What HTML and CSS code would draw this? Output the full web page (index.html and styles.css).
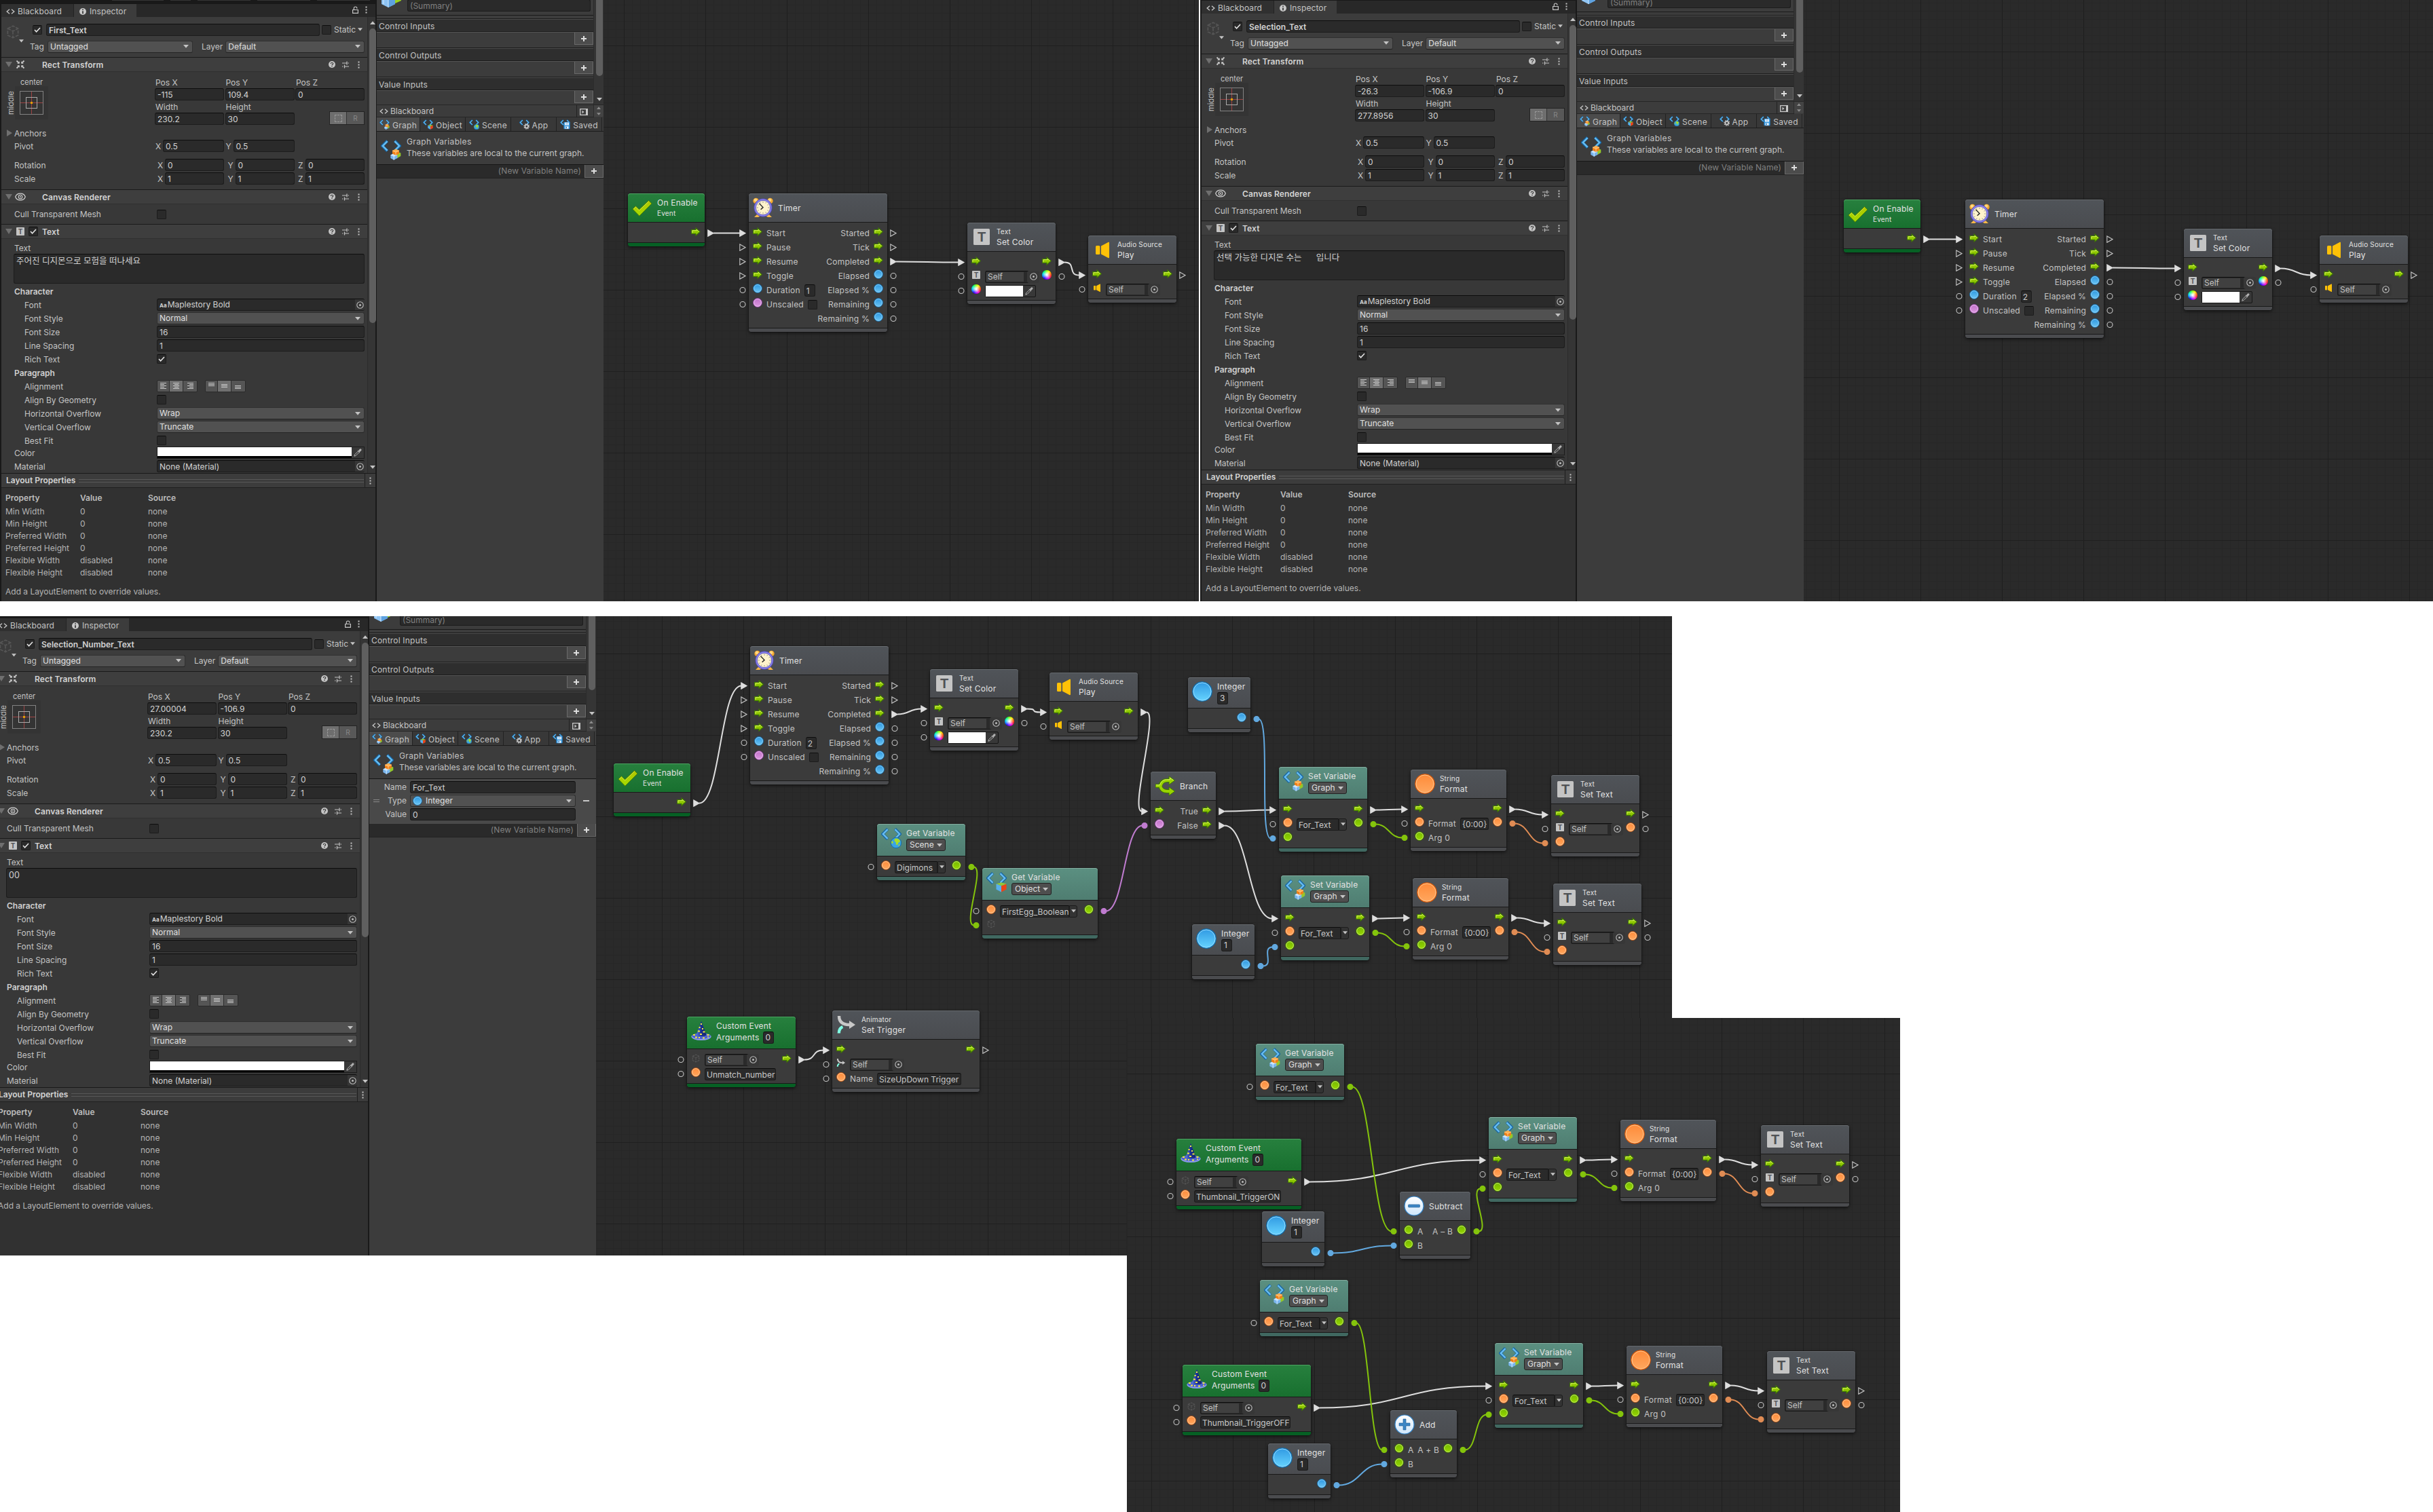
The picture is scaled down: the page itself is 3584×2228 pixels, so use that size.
FILE: index.html
```
<!DOCTYPE html>
<html lang="ko">
<head>
<meta charset="utf-8">
<title>Visual Scripting – Text graphs</title>
<link rel="stylesheet" href="styles.css">
</head>
<body>
<svg class="defs" width="0" height="0" aria-hidden="true">
  <defs>
    <linearGradient id="gBlue" x1="0" y1="0" x2="0" y2="1"><stop offset="0" stop-color="#2b96e0"/><stop offset="1" stop-color="#6cc6f5"/></linearGradient>
    <linearGradient id="gBlueBig" x1="0" y1="0" x2="0" y2="1"><stop offset="0" stop-color="#3099e2"/><stop offset="1" stop-color="#66d4ff"/></linearGradient>
    <linearGradient id="gOrange" x1="0" y1="0" x2="0" y2="1"><stop offset="0" stop-color="#ff8a38"/><stop offset="1" stop-color="#ffa860"/></linearGradient>
    <linearGradient id="gGreen" x1="0" y1="0" x2="0" y2="1"><stop offset="0" stop-color="#74b800"/><stop offset="1" stop-color="#98d800"/></linearGradient>
    <linearGradient id="gPink" x1="0" y1="0" x2="0" y2="1"><stop offset="0" stop-color="#c070c8"/><stop offset="1" stop-color="#dc98e0"/></linearGradient>
    <linearGradient id="gCheck" x1="0" y1="0" x2="0" y2="1"><stop offset="0" stop-color="#b0c400"/><stop offset="1" stop-color="#a4dc00"/></linearGradient>
    <linearGradient id="gHat" x1="0" y1="0" x2="1" y2="0"><stop offset="0" stop-color="#5a78e0"/><stop offset=".5" stop-color="#1a2f90"/><stop offset="1" stop-color="#16246c"/></linearGradient>
    <linearGradient id="gWhite" x1="0" y1="0" x2="0" y2="1"><stop offset="0" stop-color="#ffffff"/><stop offset="1" stop-color="#cfe6fa"/></linearGradient>
  </defs>
  <symbol id="arrow" viewBox="0 0 14 13"><path d="M.8 3.6H7V.9l6.2 5.6L7 12.1V9.4H.8z" fill="#8fc800" stroke="#3f7a00" stroke-width="1.1"/><path d="M1.9 8.3V4.7h6.2V3.2l3.6 3.3" fill="none" stroke="#d8f25c"/></symbol>
  <symbol id="blue" viewBox="0 0 14 14"><circle cx="7" cy="7" r="6.4" fill="url(#gBlue)" stroke="#1268a4"/><circle cx="7" cy="7" r="5.4" fill="none" stroke="#8fd0f6" stroke-width=".9"/></symbol>
  <symbol id="green" viewBox="0 0 14 14"><circle cx="7" cy="7" r="6.4" fill="url(#gGreen)" stroke="#356400"/><circle cx="7" cy="7" r="5.4" fill="none" stroke="#c8ee70" stroke-width=".9"/></symbol>
  <symbol id="orange" viewBox="0 0 14 14"><circle cx="7" cy="7" r="6.4" fill="url(#gOrange)" stroke="#b85010"/><circle cx="7" cy="7" r="5.4" fill="none" stroke="#ffd0a0" stroke-width=".9"/></symbol>
  <symbol id="pink" viewBox="0 0 14 14"><circle cx="7" cy="7" r="6.4" fill="url(#gPink)" stroke="#8a3c98"/><circle cx="7" cy="7" r="5.4" fill="none" stroke="#eec4f2" stroke-width=".9"/></symbol>
  <symbol id="blueBig" viewBox="0 0 30 30"><circle cx="15" cy="15" r="14.2" fill="url(#gBlueBig)" stroke="#0e6cac" stroke-width="1.2"/><circle cx="15" cy="15" r="13" fill="none" stroke="#98dcff"/></symbol>
  <symbol id="orangeBig" viewBox="0 0 30 30"><circle cx="15" cy="15" r="14.2" fill="url(#gOrange)" stroke="#d85808" stroke-width="1.2"/><circle cx="15" cy="15" r="13" fill="none" stroke="#ffc890"/></symbol>
  <symbol id="minus" viewBox="0 0 30 30"><circle cx="15" cy="15" r="14" fill="url(#gWhite)" stroke="#2d80c8" stroke-width="1.2"/><rect x="6.5" y="13" width="17" height="4" rx="1" fill="#3d86c4" stroke="#1f5c94" stroke-width=".6"/></symbol>
  <symbol id="plus" viewBox="0 0 30 30"><circle cx="15" cy="15" r="14" fill="url(#gWhite)" stroke="#2d80c8" stroke-width="1.2"/><path d="M13 7h4v6h6v4h-6v6h-4v-6H7v-4h6z" fill="#3d86c4" stroke="#1f5c94" stroke-width=".6"/></symbol>
  <symbol id="check" viewBox="0 0 30 30"><path d="M.8 17l4.6-4.2 5.2 5L24.6 4.4 29 9 10.8 27.2z" fill="url(#gCheck)" stroke="#4a7c00" stroke-width=".9"/><path d="M2.2 17l3.2-2.9 5.2 5L24.6 5.8" fill="none" stroke="#d8ee50" stroke-width=".8"/></symbol>
  <symbol id="clock" viewBox="0 0 30 30"><circle cx="4.6" cy="5" r="4.3" fill="#f4a830"/><circle cx="25.4" cy="5" r="4.3" fill="#f4a830"/><circle cx="4" cy="3.8" r="2.4" fill="#ffd880"/><circle cx="25" cy="3.8" r="2.4" fill="#ffd880"/><path d="M7 24l-5 5h6l3-2zM23 24l5 5h-6l-3-2z" fill="#f8b848"/><circle cx="15" cy="15" r="13.4" fill="#5a50c0"/><circle cx="15" cy="15" r="12.4" fill="#8c86ee"/><circle cx="15" cy="15" r="10.6" fill="#fff3cc" stroke="#5650b8" stroke-width=".8"/><path d="M15 5.8v2M15 22.2v2M5.8 15h2M22.2 15h2M10.4 7l.8 1.5M19.6 7l-.8 1.5M10.4 23l.8-1.5M19.6 23l-.8-1.5M7 10.4l1.5.8M23 10.4l-1.5.8M7 19.6l1.5-.8M23 19.6l-1.5-.8" stroke="#777" stroke-width=".8"/><path d="M9.4 8.8L15 14.6l-3.4 3.2" fill="none" stroke="#2c2c2c" stroke-width="1.5"/></symbol>
  <symbol id="tico" viewBox="0 0 24 24"><rect width="24" height="24" rx="1.6" fill="#c4c4c4"/><text x="12" y="19" text-anchor="middle" font-family="Liberation Sans, sans-serif" font-weight="700" font-size="20" fill="#4f5255">T</text></symbol>
  <symbol id="speaker" viewBox="0 0 24 28"><rect x="2" y="8" width="6.4" height="13" rx="1.6" fill="#ffc107"/><path d="M10 8.6L20.4 3c1-.5 1.6 0 1.6 1v21c0 1-.6 1.5-1.6 1L10 20.4z" fill="#ffc107"/></symbol>
  <symbol id="branch" viewBox="0 0 30 30"><path d="M1 15h7c1.5-6 5-8 10-8h4" fill="none" stroke="#3f7a00" stroke-width="6"/><path d="M8 15c1.5 6 5 8 10 8h4" fill="none" stroke="#3f7a00" stroke-width="6"/><path d="M21 .8L29.6 7 21 13.2zM21 16.8L29.6 23 21 29.2z" fill="#9ad400" stroke="#3f7a00"/><path d="M1.6 15h7c1.5-6 4.6-8 9.6-8h4M8 15c1.5 6 5 8 10 8h4" fill="none" stroke="#9ad400" stroke-width="4"/><path d="M2 13.8h5.6c1.4-5.4 5-8 10-8h5V3.2L27.6 7" fill="none" stroke="#dcf470" stroke-width=".9"/></symbol>
  <symbol id="hat" viewBox="0 0 30 30"><ellipse cx="15" cy="23.6" rx="14.6" ry="5.4" fill="#8c9cec"/><ellipse cx="15" cy="22.6" rx="13.6" ry="4.4" fill="#4c62d0"/><path d="M15 .6L22.4 21c0 2.6-14.8 2.6-14.8 0z" fill="url(#gHat)"/><path d="M14 4h2v2h-2zM11.6 9h2v2h-2zM16 11h2v2h-2zM10 14.5h3v2h-3zM17.5 15.5h3v2h-3zM13 19h3v2h-3zM3 20h3v2H3zM6 23.5h3v2H6zM17 24.5h3v2h-3zM23.5 20h3v2h-3zM11 24h2v2h-2zM24 23.5h2V25h-2z" fill="#f4ea40"/></symbol>
  <symbol id="anim" viewBox="0 0 30 30"><path d="M4 2c0 9 5 13 15 13" fill="none" stroke="#c8c8c8" stroke-width="4.4"/><path d="M19 9l9 6-9 6z" fill="#c8c8c8"/><path d="M3.8 27.500c0-5 1.600-8 5.600-9.500" fill="none" stroke="#80ffe4" stroke-width="4.400"/></symbol>
  <symbol id="cube" viewBox="0 0 20 22"><path d="M3 6.5L10 3l7 3.500v9L10 19l-7-3.500zM3 6.500L10 10l7-3.500M10 10v9" fill="none" stroke="#555" stroke-width="1.600" stroke-dasharray="4.500 1.500"/></symbol>
  <symbol id="br" viewBox="0 0 30 30"><path d="M9.600 1.500L2.200 9l7.400 7.500M20.400 1.500L27.800 9l-7.400 7.500" fill="none" stroke="#1464a4" stroke-width="4.200"/><path d="M9.600 2.200L2.800 9l6.800 6.800M20.400 2.200L27.200 9l-6.800 6.800" fill="none" stroke="#68bdf0" stroke-width="2.400"/></symbol>
  <symbol id="vGraph" viewBox="0 0 30 30"><use href="#br"/><path d="M19.500 19.500l4.500-2.300 5.300 2.300v4.500l-5 3-4.800-3z" fill="#94c828"/><path d="M14.300 22.400l4.900-2.400 5.200 2.400v4.600l-5.200 2.700-4.900-2.700z" fill="#78b4ec"/><path d="M14.300 22.400l4.900-2.400 5.200 2.400-5.200 2.500z" fill="#cce6ff"/><path d="M19.200 24.900v4.800" stroke="#d8ecff"/><path d="M17 16l5-2.300 5 2.300v4.400l-5 2.500-5-2.500z" fill="#f08018"/><path d="M17 16l5-2.300 5 2.300-5 2.300z" fill="#ffb050"/><path d="M22 18.300v4.600M17 16l5 2.300 5-2.300" fill="none" stroke="#ffd8a0" stroke-width=".8"/></symbol>
  <symbol id="vScene" viewBox="0 0 30 30"><use href="#br"/><circle cx="22" cy="22" r="7.700" fill="#3aa4e4" stroke="#146cae"/><path d="M21 15.500c3-.6 6 1 7.200 4-.8 2-2.500 1-3 3s-2 3.500-3 2 .2-3-1.400-4-2-3.400.2-5zM25 26l2-2.500c.5 1 .2 2.500-1 3.500zM15.500 19c1.500 0 2.500 1.500 2 3s-1.600 1-2.600.5z" fill="#a8dc28"/></symbol>
  <symbol id="vObject" viewBox="0 0 30 30"><use href="#br"/><path d="M14.500 17.600l7.500-2.400 7.500 2.400L22 20.600z" fill="#90c83c"/><path d="M14.500 17.600L22 20.600V29.500l-7.500-4z" fill="#58b0ec"/><path d="M29.500 17.600L22 20.600V29.500l7.500-4z" fill="#ec4418"/></symbol>
  <symbol id="vApp" viewBox="0 0 30 30"><use href="#br"/><circle cx="21.500" cy="20.500" r="6.500" fill="none" stroke="#b8b8b8" stroke-width="5" stroke-dasharray="2.600 2.500"/><circle cx="21.500" cy="20.500" r="4.600" fill="none" stroke="#c4c4c4" stroke-width="3.600"/></symbol>
  <symbol id="vSaved" viewBox="0 0 30 30"><use href="#br"/><rect x="11" y="8" width="18" height="20" rx="1.500" fill="#3d9ce0" stroke="#1868ac"/><rect x="14" y="9" width="12" height="8" fill="#eef6ff"/><path d="M16 11.500h8M16 14h8" stroke="#5a9cd0"/><rect x="15" y="20.500" width="10" height="7" fill="#eef6ff"/><rect x="17" y="21.500" width="3" height="5" fill="#2d7cc0"/></symbol>
  <symbol id="code" viewBox="0 0 13 8"><path d="M5 .8L1.200 4 5 7.200M8 .8L11.800 4 8 7.200" fill="none" stroke="#c4c4c4" stroke-width="1.400"/></symbol>
  <symbol id="info" viewBox="0 0 10 10"><circle cx="5" cy="5" r="5" fill="#c8c8c8"/><path d="M5 1.600v1.500M5 4.200v4" stroke="#333" stroke-width="1.700"/></symbol>
  <symbol id="help" viewBox="0 0 10 10"><circle cx="5" cy="5" r="5" fill="#c4c4c4"/><path d="M3.300 4c0-2.300 3.400-2.200 3.400-.3C6.700 5 5 4.800 5 6.200M5 7v1.200" fill="none" stroke="#3a3a3a" stroke-width="1.200"/></symbol>
  <symbol id="preset" viewBox="0 0 10 11"><path d="M0 3h6.500M8.500 3H10M7 .5v5M0 8h1.500M3.500 8H10M3.500 5.500v5" fill="none" stroke="#c4c4c4" stroke-width="1.200"/></symbol>
  <symbol id="dots" viewBox="0 0 3 11"><path d="M.5.5h2v2h-2zM.5 4.500h2v2h-2zM.5 8.500h2v2h-2z" fill="#c4c4c4"/></symbol>
  <symbol id="lock" viewBox="0 0 9 11"><path d="M.6 5.500h7.800v4.900H.6zM2.300 5.500V3.300C2.300.2 6.900.2 6.900 3.300v.4" fill="none" stroke="#c4c4c4" stroke-width="1.200"/></symbol>
  <symbol id="rect" viewBox="0 0 14 14"><path d="M1.500 1.500L5 5M12.500 1.500L9 5M1.500 12.500L5 9M12.500 12.500L9 9" stroke="#c4c4c4" stroke-width="1.800"/><path d="M5.800 2.200v3.600H2.200zM8.200 2.200v3.600h3.600zM5.800 11.800V8.200H2.200zM8.200 11.800V8.200h3.600z" fill="#c4c4c4"/></symbol>
  <symbol id="eye" viewBox="0 0 16 12"><path d="M.7 6C3-.6 13-.6 15.300 6 13 12.600 3 12.600.7 6z" fill="none" stroke="#d0d0d0" stroke-width="1.200"/><circle cx="8" cy="6" r="2.800" fill="none" stroke="#d0d0d0" stroke-width="1.100"/><circle cx="8" cy="6" r="1" fill="#d0d0d0"/></symbol>
  <symbol id="tick" viewBox="0 0 10 8"><path d="M1 4l2.600 2.800L9 1" fill="none" stroke="#e6e6e6" stroke-width="1.500"/></symbol>
  <symbol id="target" viewBox="0 0 11 11"><circle cx="5.500" cy="5.500" r="4.700" fill="none" stroke="#bdbdbd" stroke-width="1.100"/><circle cx="5.500" cy="5.500" r="1.500" fill="#bdbdbd"/></symbol>
  <symbol id="dropper" viewBox="0 0 12 12"><path d="M.8 11.200l.8-2.400 5-5 1.600 1.600-5 5z" fill="none" stroke="#b4b4b4"/><path d="M5.800 3l3.200 3.200M7.200 3.400l2-2.400c1-1 2.600.6 1.700 1.700L8.600 4.800z" fill="#b4b4b4" stroke="#b4b4b4"/></symbol>
  <symbol id="down" viewBox="0 0 8 5"><path d="M0 0h8L4 4.800z" fill="#c4c4c4"/></symbol>
  <symbol id="fold" viewBox="0 0 10 8"><path d="M0 0h10L5 8z" fill="#6f6f6f"/></symbol>
  <symbol id="unfold" viewBox="0 0 8 10"><path d="M0 0v10l8-5z" fill="#6f6f6f"/></symbol>
  <symbol id="anchor" viewBox="0 0 49 49"><rect width="49" height="49" fill="#343434"/><path d="M7.500 24.500h34M24.500 7.500v34" stroke="#a04444"/><rect x="7.500" y="7.500" width="34" height="34" fill="none" stroke="#828282"/><rect x="16.500" y="16.500" width="16" height="16" fill="none" stroke="#aaa"/><rect x="23" y="23" width="3" height="3" fill="#e0a000"/></symbol>
  <symbol id="twoCubes" viewBox="0 0 32 12"><path d="M1 0h20v6l-10 5L1 6z" fill="#8ec4f4"/><path d="M11 0v11l10-5V0z" fill="#5ea2e0"/><path d="M11 0v11M4 0v6" stroke="#d4ebff"/><path d="M21 0h9v1l-9 4z" fill="#98d020"/></symbol>
  <symbol id="dock" viewBox="0 0 12 10"><path d="M.7.7h10.600v8.600H.7z" fill="none" stroke="#c8c8c8" stroke-width="1.300"/><path d="M9 0h3v10H9zM3.500 2.800v4.400L6.500 5z" fill="#c8c8c8"/></symbol>
</svg>

<main class="sheet">
  <div class="top-row">
    <section class="screen screen-a" data-graph="first"></section>
    <section class="screen screen-b" data-graph="selection"></section>
  </div>
  <section class="screen screen-c" data-graph="number"></section>
  <section class="screen screen-d" data-graph="thumbnail"></section>
</main>
<script src="app.js"></script>
</body>
</html>
```
FILE: styles.css
```
* { box-sizing: border-box; }
body {
  margin: 0;
  width: 3584px;
  height: 2228px;
  overflow: hidden;
  background: #fff;
  color: #c4c4c4;
  font: 12px/18px Inter, "Noto Sans CJK KR", sans-serif;
  white-space: nowrap;
}
svg { display: block; flex: none; }
.defs { position: absolute; }
.sheet { position: relative; width: 3584px; height: 2228px; overflow: hidden; }
.top-row { display: flex; gap: 2px; }
.screen { position: relative; overflow: hidden; background: #191919; }
.screen-a { width: 1766px; height: 886px; }
.screen-b { width: 1816px; height: 886px; }
.screen-c { width: 2463px; height: 942px; margin-top: 22px; }
.screen-d { position: absolute; left: 1660px; top: 1500px; width: 1139px; height: 728px; }
.side { position: relative; display: flex; width: 889px; }
.screen-a .side { height: 886px; }
.screen-b .side { height: 891px; margin-top: -5px; }
.screen-c .side { height: 945px; margin: -3px 0 0 -11px; }

/* inspector */
.inspector { display: flex; flex-direction: column; width: 553px; margin-right: 2px; padding-left: 2px; background: #191919; }
.band { display: flex; height: 6px; flex: none; gap: 10px; padding-left: 163px; overflow: hidden; }
.band i { height: 1px; background: #353535; }
.tabs { display: flex; height: 19px; flex: none; background: #282828; }
.tab { display: flex; align-items: center; padding-top: 3px; background: #303030; }
.tab.back { width: 107px; gap: 4px; padding-left: 7px; border-right: 1px solid #232323; }
.tab.on { width: 92px; gap: 5px; padding-left: 8px; background: #3c3c3c; }
.tab-tools { display: flex; flex: 1; align-items: center; justify-content: flex-end; gap: 10px; padding: 0 12px 3px 0; }
.tab, .comp-head b { letter-spacing: .1px; }
.scroll { display: flex; height: 672px; flex: none; }
.props { width: 539px; background: #383838; }
.bar { display: flex; flex-direction: column; align-items: center; width: 12px; padding: 6px 0 6px 2px; background: #353535; border-left: 1px solid #2c2c2c; }
.bar .up { transform: rotate(180deg); }
.thumb { width: 10px; height: 434px; margin: 6px 0 auto; border-radius: 5px; background: #5f5f5f; }
.object { display: flex; height: 59px; background: #3c3c3c; }
.object-icon { width: 42px; padding: 10px 0 0 6px; }
.object-icon .caret { margin: -1px 0 0 20px; }
.object-main { flex: 1; padding: 9px 4px 0 0; }
.line { display: flex; align-items: center; line-height: 19px; }
.object-main .line + .line { margin-top: 6px; }
.field { height: 18px; padding: 0 3px; border: 1px solid #1c1c1c; border-top-color: #0d0d0d; border-radius: 3px; background: #2a2a2a; color: #d2d2d2; line-height: 17px; overflow: hidden; }
.name { width: 403px; margin: 0 3px 0 6px; font-weight: 600; }
.box { display: flex; align-items: center; justify-content: center; width: 14px; height: 14px; flex: none; border: 1px solid #1c1c1c; border-top-color: #0d0d0d; border-radius: 2px; background: #2a2a2a; }
.object-main .box { margin-left: 4px; }
.object-main .name + .box { margin: 0 4px 0 0; }
.drop { display: flex; align-items: center; justify-content: space-between; height: 18px; padding: 0 5px 0 3px; border: 1px solid #303030; border-bottom-color: #242424; border-radius: 3px; background: #515151; color: #e0e0e0; line-height: 14px; }
.tag { width: 214px; margin: 0 13px 0 5px; }
.layer { flex: 1; margin-left: 4px; }
.comp-head { display: flex; align-items: center; height: 22px; padding: 0 11px 0 6px; border-top: 1px solid #1a1a1a; border-bottom: 1px solid #303030; background: #3e3e3e; }
.comp-head .glyph { width: 24px; height: 16px; display: flex; align-items: center; justify-content: center; }
.comp-head .slot { width: 20px; display: flex; }
.comp-head b { flex: 1; font-weight: 600; color: #d4d4d4; padding-top: 1px; }
.tools { display: flex; align-items: center; gap: 10px; }
.tools .dots { margin-left: 3px; }
.rect-body { height: 173px; padding: 6px 4px 0 19px; }
.rect-top { display: flex; height: 72px; }
.anchor-box { display: grid; grid-template-columns: 12px 49px; grid-template-rows: 15px 49px; width: 207px; margin-left: -11px; margin-right: 11px; font-size: 11px; line-height: 18px; }
.anchor-box .hz { grid-column: 2; padding-left: 8px; line-height: 18px; }
.anchor-box .vt { writing-mode: vertical-rl; transform: rotate(180deg); line-height: 12px; text-align: center; font-size: 11px; }
.xyz { display: grid; grid-template-columns: 102px 102px 102px; column-gap: 1.5px; width: 309px; }
.xyz > span { height: 18px; padding-left: 1px; line-height: 19px; }
.pad-toggle { display: flex; justify-self: end; width: 52px; height: 20px; margin-top: -2px; border: 1px solid #232323; background: #585858; color: #888; text-align: center; font-size: 10px; }
.pad-toggle i { width: 25px; background: #6e6e6e; border-right: 1px solid #333; }
.pad-toggle i::before { content: ""; display: block; width: 9px; height: 9px; margin: 4px 7px; border: 1px dashed #999; }
.pad-toggle span { flex: 1; }
.row { display: flex; height: 18px; }
.row > label { width: 207px; flex: none; line-height: 19px; }
.anchors { align-items: center; gap: 3px; margin: 3px 0 1px -11px; }
.pivot { margin-bottom: 10px; }
.rotation { margin-bottom: 2px; }
.axis { display: grid; grid-template-columns: 11px 1fr; padding-left: 1px; line-height: 19px; }
.axis.in { padding-left: 4px; }
.cull { display: flex; align-items: center; height: 29px; padding-left: 19px; }
.cull label { width: 210px; }
.text-body { display: flex; flex-direction: column; gap: 2px; height: 345px; padding: 4px 4px 0 19px; }
.text-body > .lead { height: 16px; line-height: 20px; }
.text-body .row { align-items: center; }
.text-body .row > label { width: 210px; }
.text-body .in > label { padding-left: 15px; }
.text-body .row > .field, .text-body .row > .drop { flex: 1; }
.area { height: 44px; margin-left: -1px; padding: 0 3px; font-size: 12.5px; line-height: 19px; white-space: pre; flex: none; }
.head { height: 18px; font-weight: 600; color: #d0d0d0; padding-top: 1px; }
.obj { display: flex; align-items: center; justify-content: space-between; padding-right: 0; border-right-width: 0; }
.obj .pick { display: flex; align-items: center; justify-content: center; width: 14px; height: 16px; background: #363636; }
.obj small { font-size: 8px; font-weight: 700; margin-right: 1px; }
.aligns { display: flex; margin-right: 11px; border: 1px solid #2a2a2a; border-radius: 2px; background: #555; height: 18px; }
.aligns i { display: flex; flex-direction: column; gap: 1px; width: 20px; padding: 3px 5px; border-right: 1px solid #2c2c2c; }
.aligns i:first-child { width: 18px; padding-left: 4px; }
.aligns i:last-child { border: 0; }
.aligns i.on { background: #707070; }
.aligns s { flex: none; width: 9px; height: 1px; background: #c8c8c8; }
.aligns .h s:nth-child(even) { width: 6px; }
.aligns .c { align-items: center; }
.aligns .r { align-items: flex-end; }
.aligns .m { padding-top: 5px; }
.aligns .b { padding-top: 7px; }
.swatch { display: flex; flex: 1; height: 18px; border: 1px solid #1c1c1c; background: #383838; }
.swatch i { flex: 1; background: #fff; border-bottom: 3px solid #000; }
.swatch svg { margin: 2px 3px; }
.color-row { margin-top: -2px; }
.layout-head { display: flex; align-items: center; height: 22px; flex: none; border-top: 1px solid #1a1a1a; border-bottom: 1px solid #1f1f1f; background: #3c3c3c; padding-left: 7px; font-weight: 600; color: #d4d4d4; line-height: 20px; }
.layout-head i { flex: 1; height: 5px; margin: 0 1px 0 5px; border: solid #585858; border-width: 1px 0; }
.layout-head span.end { display: flex; align-items: center; justify-content: center; width: 16px; height: 20px; border-left: 1px solid #1f1f1f; }
.layout-body { flex: 1; padding: 6px 0 0 6px; background: #313131; color: #b4b4b4; }
.layout-grid { display: grid; grid-template-columns: 110px 100px 1fr; }
.layout-grid b { font-weight: 600; margin-bottom: 2px; color: #bdbdbd; }
.layout-body p { margin: 10px 0 0; }

/* graph inspector and blackboard */
.panel { width: 334px; background: #3c3c3c; display: flex; flex-direction: column; }
.units { display: flex; height: 154px; flex: none; }
.unit-list { width: 319px; }
.summary { display: flex; height: 23px; gap: 7px; padding-left: 6px; border-bottom: 1px solid #1a1a1a; }
.summary .field { width: 270px; height: 18px; margin-top: -1px; color: #808080; line-height: 18px; }
.unit { height: 43px; padding-top: 4px; }
.unit .cap { height: 20px; padding-left: 3px; border: solid #1c1c1c; border-width: 1px 0; background: #2e2e2e; box-shadow: inset 0 1px #4c4c4c; line-height: 21px; letter-spacing: .2px; }
.unit .slot { display: flex; justify-content: flex-end; border-top: 1px solid #555; height: 19px; }
.add { display: flex; align-items: center; justify-content: center; width: 28px; height: 18px; border: 1px solid #6a6a6a; border-top: 0; background: #4c4c4c; }
.add::before { content: ""; width: 8px; height: 8px; background: linear-gradient(#ddd,#ddd) 50% 50%/8px 2px no-repeat, linear-gradient(#ddd,#ddd) 50% 50%/2px 8px no-repeat; }
.units .bar { width: 15px; padding: 0 0 5px 2px; }
.units .thumb { height: 112px; margin-top: 0; border-radius: 0 0 5px 5px; }
.bb-head { display: flex; align-items: center; height: 19px; flex: none; gap: 3px; padding-left: 4px; border-top: 1px solid #262626; border-bottom: 1px solid #262626; }
.bb-head .dock { width: 22px; height: 18px; margin-left: auto; border-left: 1px solid #222; padding: 5px 4px 0; }
.bb-head .step { display: flex; flex-direction: column; justify-content: space-around; align-items: center; width: 15px; height: 18px; background: #484848; border-left: 1px solid #222; opacity: .6; }
.bb-head .step svg:first-child { transform: rotate(180deg); }
.bb-tabs { display: flex; height: 21px; flex: none; border-bottom: 1px solid #1c1c1c; }
.bb-tabs span { display: flex; align-items: center; justify-content: center; gap: 4px; width: 67px; padding-top: 3px; border-right: 1px solid #222; background: #383838; letter-spacing: .3px; }
.bb-tabs span:first-child { width: 64px; background: #4c4c4c; }
.bb-tabs svg { margin-top: -3px; }
.bb-info { display: flex; height: 49px; flex: none; padding: 7px 0 0 6px; gap: 8px; border-bottom: 1px solid #161616; }
.bb-info svg { margin-top: 5px; }
.bb-info b { display: block; font-weight: 400; line-height: 16px; letter-spacing: .35px; }
.bb-info span { line-height: 14px; }
.var { display: flex; align-items: center; height: 66px; flex: none; background: #494949; padding: 0 0 2px 6px; }
.var .grip { width: 9px; height: 4px; border: solid #888; border-width: 1px 0; }
.var .fields { display: flex; flex-direction: column; gap: 2px; }
.var .fields div { display: flex; align-items: center; }
.var label { flex: none; width: 45px; padding-right: 5px; text-align: right; }
.var .fields .field, .var .fields .drop { flex: 0 0 244px; }
.var .minus { width: 9px; height: 2px; margin-left: 11px; background: #c8c8c8; }
.var .drop span { display: flex; gap: 5px; align-items: center; }
.new-var { display: flex; height: 20px; flex: none; border-bottom: 1px solid #222; background: #2a2a2a; color: #808080; text-align: right; letter-spacing: .1px; }
.new-var span:first-child { flex: 1; padding-right: 4px; }
.new-var .add { flex: none; height: 19px; margin-left: 1px; }

/* graph canvas */
.canvas {
  position: absolute;
  inset: 0 0 0 auto;
  overflow: hidden;
  background-color: #2a2a2a;
  background-image:
    linear-gradient(90deg, #1f1f1f 1px, transparent 1px), linear-gradient(#1f1f1f 1px, transparent 1px),
    linear-gradient(90deg, #272727 1px, transparent 1px), linear-gradient(#272727 1px, transparent 1px);
  background-size: 120px 120px, 120px 120px, 12px 12px, 12px 12px;
}
.screen-a .canvas { left: 889px; background-position: 30px 67px; }
.screen-b .canvas { left: 889px; background-position: 52px 76px; }
.screen-c .canvas { left: 878px; background-position: 97px 55px; }
.screen-d .canvas { left: 0; background-position: 36px 82px; }
.wires { position: absolute; inset: 0; width: 100%; height: 100%; fill: none; stroke-width: 2; }
.node { position: absolute; border-radius: 4px; background: #3b3b3b; box-shadow: 0 2px 5px rgba(0,0,0,.55), 0 0 0 .5px #1c1c1c; }
.node header { display: flex; height: 42px; border-radius: 4px 4px 0 0; background: linear-gradient(#505459, #4a4c50); box-shadow: inset 0 1px #666a6e; color: #e2e2e2; padding: 6px 0 0 6px; gap: 7px; }
.node header > svg, .node header > .hic { width: 30px; height: 30px; }
.node.var-node header { height: 47px; background: linear-gradient(#5b9081, #4f7d71); box-shadow: inset 0 1px #84ac9f; }
.node.event header { background: linear-gradient(#27803e, #18702f); box-shadow: inset 0 1px #4fa464; }
.node.tall header { height: 47px; }
.node.lit header { height: 45px; }
.hic { display: flex; align-items: center; justify-content: center; }
.titles { margin-top: -1px; letter-spacing: .2px; }
.titles div { height: 17px; line-height: 18px; display: flex; align-items: center; gap: 5px; }
.titles .sub { font-size: 10px; height: 15px; line-height: 14px; }
.titles.sub-last div:last-child { height: 15px; line-height: 13px; }
.titles.one { padding-top: 8px; }
.titles .pop { display: inline-flex; height: 18px; gap: 4px; padding: 0 4px; border-color: #222; background: #4e4e4e; letter-spacing: 0; }
.titles .field { width: 16px; height: 18px; }
.node .body { padding: 5px 0 3px; border: solid #191919; border-width: 1px 0; }
.node footer { height: 5px; border-radius: 0 0 4px 4px; background: #4a4b4e; }
.node.var-node footer { background: #406860; }
.node.event footer { background: #066024; }
.prow { position: relative; display: flex; justify-content: space-between; height: 21px; padding: 0 6px; }
.port { display: flex; align-items: center; gap: 6px; height: 21px; letter-spacing: .2px; }
.port > .pi { width: 14px; height: 14px; margin-top: -5px; display: flex; align-items: center; justify-content: center; }
.port.out { flex-direction: row-reverse; }
.port .field { color: #c8c8c8; padding: 0 2px; letter-spacing: 0; overflow: visible; }
.port span.lbl { padding-top: 1px; }
.wheel { border-radius: 50%; background: radial-gradient(#fff 5%, transparent 65%), conic-gradient(#8f0, #fe0, #f60, #f22, #f0c, #80f, #20f, #08f, #0dd, #0f6, #8f0); }
.self { display: flex; width: 74px; height: 18px; padding: 1px; border: 1px solid #1c1c1c; border-top-color: #0d0d0d; border-right: 0; border-radius: 3px; background: #2a2a2a; line-height: 14px; letter-spacing: 0; }
.self span { width: 55px; flex: none; padding-left: 2px; background: #404040; }
.self i { display: flex; align-items: center; justify-content: center; width: 18px; height: 18px; flex: none; margin: -2px 0 0 5px; border-radius: 3px; background: #373737; }
.combo { display: flex; }
.combo .field { border-radius: 3px 0 0 3px; }
.combo i { display: flex; align-items: center; justify-content: center; width: 12px; height: 18px; border: 1px solid #1c1c1c; border-radius: 0 3px 3px 0; background: #333; }
.chip { display: flex; width: 75px; height: 18px; border: 1px solid #161616; background: #383838; border-radius: 2px; }
.chip i { width: 55px; background: #fff; }
.chip svg { margin: 2px 3px; }
.pin { position: absolute; top: 5px; width: 10px; height: 11px; fill: none; stroke: #c4c4c4; stroke-width: 1.1; }
.pin.l { left: -14px; }
.pin.r { right: -14px; }
```
FILE: app.js
```
const ic = (n, w, h = w, c = '') => `<svg class="${c}" width="${w}" height="${h}"><use href="#${n}"/></svg>`;
const field = (v, w) => `<div class="field"${w ? ` style="width:${w}px"` : ''}>${v}</div>`;
const drop = (v, c = '') => `<div class="drop ${c}"><span>${v}</span>${ic('down', 8, 5)}</div>`;
const box = (on) => `<span class="box">${on ? ic('tick', 10, 8) : ''}</span>`;
const axis = (l, v, c = '') => `<div class="axis ${c}"><span>${l}</span>${field(v)}</div>`;
const compHead = (glyph, slot, title) => `<div class="comp-head">${ic('fold', 10, 8)}<span class="glyph">${glyph}</span><span class="slot">${slot}</span><b>${title}</b><span class="tools">${ic('help', 10)}${ic('preset', 10, 11)}${ic('dots', 3, 11, 'dots')}</span></div>`;
const row = (label, control, c = 'in') => `<div class="row ${c}"><label>${label}</label>${control}</div>`;
const lines = (n) => '<s></s>'.repeat(n);

function inspector(d) {
  return `<div class="inspector">
  <div class="band">${d.band ? [76, 30, 78, 78, 78].map((w) => `<i style="width:${w}px"></i>`).join('') : ''}</div>
  <div class="tabs"><div class="tab back">${ic('code', 13, 8)}Blackboard</div><div class="tab on">${ic('info', 10)}Inspector</div>
    <div class="tab-tools">${ic('lock', 9, 11)}${ic('dots', 3, 11)}</div></div>
  <div class="scroll"><div class="props">
    <div class="object"><div class="object-icon">${ic('cube', 22, 24)}${ic('down', 7, 5, 'caret')}</div><div class="object-main">
      <div class="line">${box(true)}<div class="field name">${d.name}</div>${box(false)}Static&nbsp;${ic('down', 7, 5)}</div>
      <div class="line">Tag${drop('Untagged', 'tag')}Layer${drop('Default', 'layer')}</div></div></div>
    ${compHead(ic('rect', 14), '', 'Rect Transform')}
    <div class="rect-body">
      <div class="rect-top"><div class="anchor-box"><span class="hz">center</span><span class="vt">middle</span>${ic('anchor', 49)}</div>
        <div><div class="xyz"><span>Pos X</span><span>Pos Y</span><span>Pos Z</span></div>
        <div class="xyz">${d.pos.map((v) => field(v)).join('')}</div>
        <div class="xyz"><span>Width</span><span>Height</span></div>
        <div class="xyz">${d.size.map((v) => field(v)).join('')}<div class="pad-toggle"><i></i><span>R</span></div></div></div></div>
      <div class="row anchors">${ic('unfold', 8, 10)}<label>Anchors</label></div>
      <div class="row pivot"><label>Pivot</label><div class="xyz">${axis('X', '0.5')}${axis('Y', '0.5')}</div></div>
      <div class="row rotation"><label>Rotation</label><div class="xyz">${'XYZ'.split('').map((a) => axis(a, 0, 'in')).join('')}</div></div>
      <div class="row scale"><label>Scale</label><div class="xyz">${'XYZ'.split('').map((a) => axis(a, 1, 'in')).join('')}</div></div>
    </div>
    ${compHead(ic('eye', 16, 12), '', 'Canvas Renderer')}
    <div class="cull"><label>Cull Transparent Mesh</label>${box(false)}</div>
    ${compHead(ic('tico', 12), box(true), 'Text')}
    <div class="text-body"><div class="lead">Text</div><div class="field area">${d.text}</div>
      <div class="head">Character</div>
      ${row('Font', `<div class="field obj"><span><small>Aa</small>Maplestory Bold</span><span class="pick">${ic('target', 11)}</span></div>`)}
      ${row('Font Style', drop('Normal'))}
      ${row('Font Size', field(16))}
      ${row('Line Spacing', field(1))}
      ${row('Rich Text', box(true))}
      <div class="head">Paragraph</div>
      ${row('Alignment', `<div class="aligns"><i class="h">${lines(5)}</i><i class="h c on">${lines(5)}</i><i class="h r">${lines(5)}</i></div><div class="aligns"><i>${lines(3)}</i><i class="m on">${lines(3)}</i><i class="b">${lines(3)}</i></div>`)}
      ${row('Align By Geometry', box(false))}
      ${row('Horizontal Overflow', drop('Wrap'))}
      ${row('Vertical Overflow', drop('Truncate'))}
      ${row('Best Fit', box(false))}
      ${row('Color', `<div class="swatch"><i></i>${ic('dropper', 12)}</div>`, 'color-row')}
      ${row('Material', `<div class="field obj"><span>None (Material)</span><span class="pick">${ic('target', 11)}</span></div>`, '')}
    </div></div>
    <div class="bar">${ic('down', 8, 5, 'up')}<div class="thumb"></div>${ic('down', 8, 5)}</div></div>
  <div class="layout-head">Layout Properties<i></i><span class="end">${ic('dots', 3, 11)}</span></div>
  <div class="layout-body"><div class="layout-grid"><b>Property</b><b>Value</b><b>Source</b>
    ${[['Min Width', 0], ['Min Height', 0], ['Preferred Width', 0], ['Preferred Height', 0], ['Flexible Width', 'disabled'], ['Flexible Height', 'disabled']].map(([k, v]) => `<span>${k}</span><span>${v}</span><span>none</span>`).join('')}
    </div><p>Add a LayoutElement to override values.</p></div>
  </div>`;
}

function panel(d) {
  const unit = (t) => `<div class="unit"><div class="cap">${t}</div><div class="slot"><span class="add"></span></div></div>`;
  const v = d.variable;
  return `<div class="panel"><div class="units"><div class="unit-list"><div class="summary">${ic('twoCubes', 32, 12)}${field('(Summary)')}</div>
    ${['Control Inputs', 'Control Outputs', 'Value Inputs'].map(unit).join('')}</div>
    <div class="bar"><div class="thumb"></div>${ic('down', 8, 5)}</div></div>
  <div class="bb-head">${ic('code', 13, 8)}Blackboard<span class="dock">${ic('dock', 12, 10)}</span><span class="step">${ic('down', 6, 4)}${ic('down', 6, 4)}</span></div>
  <div class="bb-tabs">${['Graph', 'Object', 'Scene', 'App', 'Saved'].map((t) => `<span>${ic('v' + t, 15)}${t}</span>`).join('')}</div>
  <div class="bb-info">${ic('vGraph', 30)}<div><b>Graph Variables</b><span>These variables are local to the current graph.</span></div></div>
  ${v ? `<div class="var"><span class="grip"></span><div class="fields"><div><label>Name</label>${field(v.name)}</div><div><label>Type</label>${drop(ic('blue', 14) + v.type)}</div><div><label>Value</label>${field(v.value)}</div></div><span class="minus"></span></div>` : ''}
  <div class="new-var"><span>(New Variable Name)</span><span class="add"></span></div></div>`;
}

/* node templates: cls, header height, icon, title markup, rows of [in, out] ports */
const p = (icon, label = '', extra = '') => ({ icon, label, extra });
const self = `<div class="self"><span>Self</span><i>${ic('target', 11)}</i></div>`;
const combo = (v, w) => `<div class="combo">${field(v, w)}<i>${ic('down', 7, 5)}</i></div>`;
const A = p('arrow');
const two = (a, b) => `<div class="titles"><div class="sub">${a}</div><div>${b}</div></div>`;
const one = (a) => `<div class="titles one"><div>${a}</div></div>`;
const kinds = {
  onEnable: () => ({ cls: 'event', w: 113, icon: 'check', title: '<div class="titles sub-last"><div>On Enable</div><div class="sub">Event</div></div>', rows: [[null, A]] }),
  timer: (s) => ({ w: 204, icon: 'clock', title: one('Timer'), rows: [
    [p('arrow', 'Start'), p('arrow', 'Started')], [p('arrow', 'Pause'), p('arrow', 'Tick')], [p('arrow', 'Resume'), p('arrow', 'Completed')],
    [p('arrow', 'Toggle'), p('blue', 'Elapsed')], [p('blue', 'Duration', field(s, 16)), p('blue', 'Elapsed %')], [p('pink', 'Unscaled', box(false)), p('blue', 'Remaining')], [null, p('blue', 'Remaining %')]] }),
  setColor: () => ({ w: 130, icon: 'tico', title: two('Text', 'Set Color'), rows: [[A, A], [p('tico', '', self), p('wheel')], [p('wheel', '', `<div class="chip"><i></i>${ic('dropper', 12)}</div>`), null]] }),
  play: () => ({ w: 130, icon: 'speaker', title: two('Audio Source', 'Play'), rows: [[A, A], [p('speaker', '', self), null]] }),
  branch: () => ({ w: 96, icon: 'branch', title: one('Branch'), rows: [[A, p('arrow', 'True')], [p('pink'), p('arrow', 'False')]] }),
  integer: (v) => ({ cls: 'lit', h: 45, w: 92, icon: 'blueBig', title: `<div class="titles"><div>Integer</div>${field(v)}</div>`, rows: [[null, p('blue')]] }),
  getVar: (scope, name, fw, w) => ({ cls: 'var-node', h: 47, w: w || 130, icon: 'v' + scope, title: `<div class="titles"><div>Get Variable</div>${drop(scope, 'pop')}</div>`,
    rows: [[p('orange', '', combo(name, fw || 62)), p('green')]].concat(scope === 'Object' ? [[p('cube'), null]] : []) }),
  setVar: () => ({ cls: 'var-node', h: 47, w: 130, icon: 'vGraph', title: `<div class="titles"><div>Set Variable</div>${drop('Graph', 'pop')}</div>`, rows: [[A, A], [p('orange', '', combo('For_Text', 62)), p('green')], [p('green'), null]] }),
  format: () => ({ w: 141, icon: 'orangeBig', title: two('String', 'Format'), rows: [[A, A], [p('orange', 'Format', field('{0:00}', 42)), p('orange')], [p('green', 'Arg 0'), null]] }),
  setText: () => ({ w: 130, icon: 'tico', title: two('Text', 'Set Text'), rows: [[A, A], [p('tico', '', self), p('orange')], [p('orange'), null]] }),
  custom: (name, fw, w) => ({ cls: 'event tall', h: 47, w, icon: 'hat', title: `<div class="titles"><div>Custom Event</div><div>Arguments${field(0)}</div></div>`, rows: [[p('cube', '', self), A], [p('orange', '', field(name, fw)), null]] }),
  trigger: () => ({ w: 217, icon: 'anim', title: two('Animator', 'Set Trigger'), rows: [[A, A], [p('anim', '', self), null], [p('orange', 'Name', field('SizeUpDown Trigger', 124)), null]] }),
  math: (t, sign, w) => ({ w, icon: t === 'Add' ? 'plus' : 'minus', title: one(t), rows: [[p('green', 'A'), p('green', `A ${sign} B`)], [p('green', 'B'), null]] }),
};

const W = '#dedede', G = '#84c40c', O = '#e08c54', B = '#62a9e0', P = '#c07cd0';
const chain = (s) => [[s, 0, 'f' + s, 0, W], ['f' + s, 0, 't' + s, 0, W], [s, 1, 'f' + s, 2, G], ['f' + s, 1, 't' + s, 2, O]];
const graphs = {
  first: {
    ox: 889, oy: 0,
    side: { band: true, name: 'First_Text', pos: ['-115', '109.4', '0'], size: ['230.2', '30'], text: '주어진 디지몬으로 모험을 떠나세요' },
    nodes: { e: [925, 285, 'onEnable'], t: [1103, 285, 'timer', 1], c: [1425, 328, 'setColor'], a: [1603, 347, 'play'] },
    wires: [['e', 0, 't', 0, W], ['t', 2, 'c', 0, W], ['c', 0, 'a', 0, W]],
  },
  selection: {
    ox: 2657, oy: 0,
    side: { name: 'Selection_Text', pos: ['-26.3', '-106.9', '0'], size: ['277.8956', '30'], text: '선택 가능한 디지몬 수는      입니다' },
    nodes: { e: [2716, 294, 'onEnable'], t: [2895, 294, 'timer', 2], c: [3217, 337, 'setColor'], a: [3417, 347, 'play'] },
    wires: [['e', 0, 't', 0, W], ['t', 2, 'c', 0, W], ['c', 0, 'a', 0, W]],
  },
  number: {
    ox: 878, oy: 908,
    side: { name: 'Selection_Number_Text', pos: ['27.00004', '-106.9', '0'], size: ['230.2', '30'], text: '00', variable: { name: 'For_Text', type: 'Integer', value: 0 } },
    nodes: {
      e: [904, 1125, 'onEnable'], t: [1105, 952, 'timer', 2], c: [1370, 986, 'setColor'], a: [1546, 991, 'play'],
      gs: [1292, 1214, 'getVar', 'Scene', 'Digimons', 63], go: [1447, 1279, 'getVar', 'Object', 'FirstEgg_Boolean', 102, 170],
      br: [1695, 1137, 'branch'], i3: [1750, 998, 'integer', 3], i1: [1756, 1362, 'integer', 1],
      x: [1884, 1130, 'setVar'], fx: [2078, 1134, 'format'], tx: [2285, 1142, 'setText'],
      y: [1887, 1290, 'setVar'], fy: [2081, 1294, 'format'], ty: [2288, 1302, 'setText'],
      cu: [1012, 1498, 'custom', 'Unmatch_number', 105, 160], tr: [1226, 1489, 'trigger'],
    },
    wires: [['e', 0, 't', 0, W], ['t', 2, 'c', 0, W], ['c', 0, 'a', 0, W], ['a', 0, 'br', 0, W], ['gs', 0, 'go', 1, G], ['go', 0, 'br', 1, P],
      ['br', 0, 'x', 0, W], ['br', 1, 'y', 0, W], ['i3', 0, 'x', 2, B], ['i1', 0, 'y', 2, B], ...chain('x'), ...chain('y'), ['cu', 0, 'tr', 0, W]],
  },
  thumbnail: {
    ox: 1660, oy: 1500,
    nodes: {
      g: [1850, 1538, 'getVar', 'Graph', 'For_Text'], c: [1733, 1678, 'custom', 'Thumbnail_TriggerON', 128, 184], i: [1859, 1785, 'integer', 1], m: [2062, 1756, 'math', 'Subtract', '–', 104],
      x: [2193, 1646, 'setVar'], fx: [2387, 1650, 'format'], tx: [2594, 1658, 'setText'],
      h: [1856, 1886, 'getVar', 'Graph', 'For_Text'], d: [1742, 2011, 'custom', 'Thumbnail_TriggerOFF', 133, 189], j: [1868, 2127, 'integer', 1], n: [2048, 2078, 'math', 'Add', '+', 98],
      y: [2202, 1979, 'setVar'], fy: [2396, 1983, 'format'], ty: [2603, 1991, 'setText'],
    },
    wires: [['c', 0, 'x', 0, W], ['g', 0, 'm', 0, G], ['i', 0, 'm', 1, B], ['m', 0, 'x', 2, G], ...chain('x'),
      ['d', 0, 'y', 0, W], ['h', 0, 'n', 0, G], ['j', 0, 'n', 1, B], ['n', 0, 'y', 2, G], ...chain('y')],
  },
};

function canvas(g) {
  const built = {}, lit = {};
  for (const [id, [x, y, kind, ...args]] of Object.entries(g.nodes)) {
    built[id] = { h: 42, cls: '', ...kinds[kind](...args), x: x - g.ox, y: y - g.oy };
  }
  const wires = g.wires.map(([a, ra, b, rb, color]) => {
    const s = built[a], t = built[b], r = s.rows[ra][1].icon === 'arrow' ? 13 : 12;
    lit[`${a}${ra}r`] = lit[`${b}${rb}l`] = color;
    const x1 = s.x + s.w + r, y1 = s.y + s.h + 16.5 + 21 * ra, x2 = t.x - r, y2 = t.y + t.h + 16.5 + 21 * rb;
    const k = Math.max(18, Math.abs(x2 - x1) / 2);
    return `<path d="M${x1} ${y1}C${x1 + k} ${y1} ${x2 - k} ${y2} ${x2} ${y2}" stroke="${color}"/>`;
  }).join('');
  const pin = (port, key, side) => {
    const c = lit[key], fill = c ? ` style="fill:${c};stroke:${c}"` : '';
    return `<svg class="pin ${side}"${fill}>${port.icon === 'arrow' ? '<path d="M.8 .9v9.4l8.2-4.7z"/>' : '<circle cx="5" cy="5.5" r="4"/>'}</svg>`;
  };
  const small = { tico: [12, 12], speaker: [12, 14], cube: [14, 15], anim: [14, 14] };
  const glyph = (n) => n === 'wheel' ? '<span class="pi wheel"></span>' : `<span class="pi">${ic(n, ...(small[n] || [14, n === 'arrow' ? 13 : 14]))}</span>`;
  const port = (q, dir) => q ? `<div class="port ${dir}">${glyph(q.icon)}${q.label ? `<span class="lbl">${q.label}</span>` : ''}${q.extra}</div>` : '<span></span>';
  const nodes = Object.entries(built).map(([id, n]) => {
    const big = { tico: [24, 24], speaker: [24, 28] }[n.icon];
    const head = big ? `<span class="hic">${ic(n.icon, ...big)}</span>` : ic(n.icon, 30);
    const rows = n.rows.map(([l, r], i) => `<div class="prow">${port(l, 'in')}${port(r, 'out')}${l ? pin(l, `${id}${i}l`, 'l') : ''}${r ? pin(r, `${id}${i}r`, 'r') : ''}</div>`).join('');
    return `<div class="node ${n.cls}" style="left:${n.x}px;top:${n.y}px;width:${n.w}px"><header>${head}${n.title}</header><div class="body">${rows}</div><footer></footer></div>`;
  }).join('');
  return `<div class="canvas"><svg class="wires">${wires}</svg>${nodes}</div>`;
}

document.querySelectorAll('.screen').forEach((el) => {
  const g = graphs[el.dataset.graph];
  el.innerHTML = (g.side ? `<div class="side">${inspector(g.side)}${panel(g.side)}</div>` : '') + canvas(g);
});
```
